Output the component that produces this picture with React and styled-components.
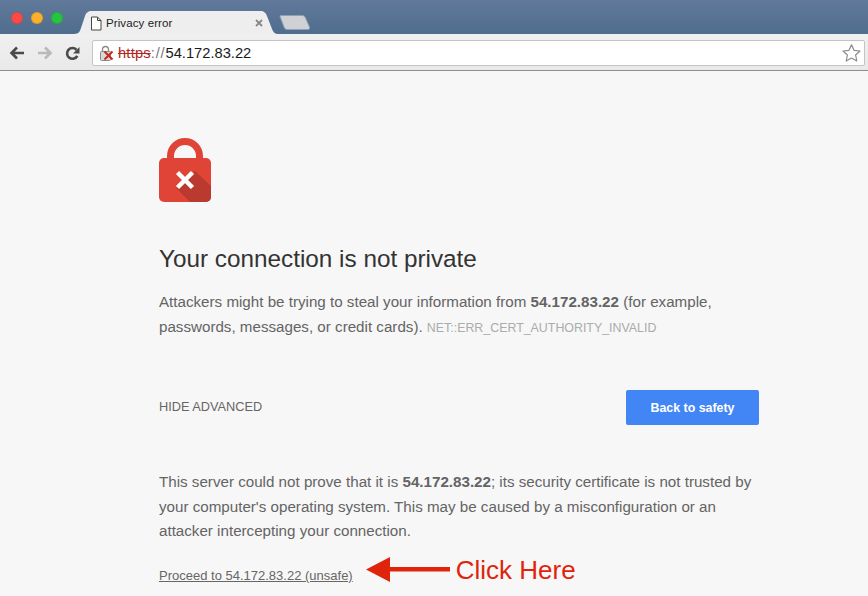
import styled, { createGlobalStyle } from 'styled-components';

const GlobalStyle = createGlobalStyle`
  html, body {
    margin: 0;
    padding: 0;
    height: 100%;
    overflow: hidden;
    background: #f7f7f7;
  }
  #root {
    height: 100%;
  }
`;

const Window = styled.div`
  display: flex;
  flex-direction: column;
  width: 868px;
  height: 596px;
  overflow: hidden;
  font-family: 'Liberation Sans', Arial, sans-serif;
`;

const TitleBar = styled.div`
  display: flex;
  align-items: flex-end;
  height: 34px;
  flex: none;
  background: linear-gradient(#61799a, #4f6d8e);
`;

const Lights = styled.div`
  display: flex;
  gap: 8px;
  align-self: flex-start;
  padding: 12px 0 0 11px;
  width: 74px;
  box-sizing: border-box;
  flex: none;
`;

const Light = styled.span`
  width: 12px;
  height: 12px;
  border-radius: 50%;
  background: ${(p) => p.$color};
  box-shadow: inset 0 0 0 1px rgba(0, 0, 0, 0.1);
`;

const Tab = styled.div`
  position: relative;
  display: flex;
  align-items: center;
  width: 204px;
  height: 23px;
  padding: 1px 0 0 16px;
  box-sizing: border-box;
  flex: none;
  font-size: 11.5px;
  letter-spacing: 0.1px;
  color: #222;
`;

const TabShape = styled.svg`
  position: absolute;
  left: 0;
  top: 0;
  z-index: 0;
`;

const TabIcon = styled.svg`
  position: relative;
  flex: none;
  margin: 0 4px 0 0;
`;

const TabTitle = styled.span`
  position: relative;
  flex: 1;
`;

const TabClose = styled.svg`
  position: relative;
  flex: none;
  margin-right: 15px;
`;

const NewTab = styled.svg`
  flex: none;
  align-self: flex-end;
  margin: 0 0 4px 1px;
`;

const Toolbar = styled.div`
  display: flex;
  align-items: center;
  height: 37px;
  flex: none;
  box-sizing: border-box;
  padding: 2px 3px 0 9px;
  background: linear-gradient(#f0f0f0, #e9e9e9);
  border-bottom: 1px solid #8e8e8e;
`;

const NavIcon = styled.svg`
  flex: none;
  margin-right: ${(p) => p.$gap}px;
`;

const Omnibox = styled.div`
  display: flex;
  align-items: center;
  flex: 1;
  height: 26px;
  box-sizing: border-box;
  padding: 0 2px 0 6px;
  background: #fff;
  border: 1px solid #c4c4c4;
  border-radius: 2px;
  font-size: 14.7px;
  color: #1a1a1a;
`;

const SecurityIcon = styled.svg`
  flex: none;
  margin-right: 4px;
`;

const Scheme = styled.span`
  color: #b3261e;
  text-decoration: line-through;
  letter-spacing: 0.2px;
`;

const Separator = styled.span`
  color: #777;
  letter-spacing: 0.8px;
`;

const Host = styled.span`
  flex: 1;
`;

const Page = styled.main`
  position: relative;
  flex: 1;
  box-sizing: border-box;
  padding: 67px 109px 0 159px;
  background: #f7f7f7;
  color: #646464;
  font-size: 15.16px;
  line-height: 24.5px;
`;

const LockIcon = styled.svg`
  display: block;
`;

const Heading = styled.h1`
  margin: 42px 0 16px;
  font-size: 24.3px;
  line-height: 30px;
  font-weight: 400;
  color: #333;
`;

const Paragraph = styled.p`
  margin: 0;
`;

const ErrorCode = styled.span`
  font-size: 12.4px;
  color: #ababab;
`;

const Actions = styled.div`
  display: flex;
  align-items: center;
  justify-content: space-between;
  margin: 50px 0 45px;
`;

const TextButton = styled.span`
  font-size: 12.75px;
  color: #666;
`;

const PrimaryButton = styled.button`
  width: 133px;
  height: 35px;
  padding: 0;
  border: 0;
  border-radius: 2px;
  background: #4285f4;
  color: #fff;
  font-family: inherit;
  font-size: 12.4px;
  font-weight: 700;
`;

const ProceedRow = styled.div`
  display: flex;
  align-items: center;
  margin-top: 10px;
  height: 32px;
`;

const ProceedLink = styled.a`
  font-size: 13px;
  color: #666;
  text-decoration: underline;
  margin-top: 13px;
`;

const Arrow = styled.svg`
  flex: none;
  margin: 0 6px 0 13px;
`;

const Annotation = styled.span`
  font-size: 26px;
  line-height: 32px;
  color: #e0240c;
`;

export default function App() {
  return (
    <Window>
      <GlobalStyle />
      <TitleBar>
        <Lights>
          <Light $color="#fc4a47" />
          <Light $color="#fcb02b" />
          <Light $color="#27c43f" />
        </Lights>
        <Tab>
          <TabShape width="204" height="23" viewBox="0 0 204 23">
            <path d="M0 23 C5 23 6 20 7 17 L11 5 C12 2 14 0 18 0 L186 0 C190 0 192 2 193 5 L198 18 C199 21 201 23 204 23 Z" fill="#eeeeee" />
          </TabShape>
          <TabIcon width="12" height="15" viewBox="0 0 12 15">
            <path d="M1.500 1H7.500L11 4.500V14H1.500Z M7.500 1V4.500H11" fill="#fff" stroke="#444" strokeWidth="1" />
          </TabIcon>
          <TabTitle>Privacy error</TabTitle>
          <TabClose width="8" height="8" viewBox="0 0 8 8">
            <path d="M1 1L7 7M7 1L1 7" stroke="#888" strokeWidth="1.800" />
          </TabClose>
        </Tab>
        <NewTab width="32" height="15" viewBox="0 0 32 15">
          <path d="M1 1.500 C1 1 1.500 .5 2 .5 L23 .5 C25 .5 26 1.500 26.500 3 L30.500 12 C31 13.500 30 14.500 29 14.500 L8 14.500 C6.500 14.500 5.500 13.500 5 12 Z" fill="#cfd1d4" stroke="#8fa0b4" strokeWidth="1" />
        </NewTab>
      </TitleBar>
      <Toolbar>
        <NavIcon $gap={12} width="16" height="14" viewBox="0 0 16 14">
          <path d="M15 7H3M8 1.500L2.500 7L8 12.500" fill="none" stroke="#4a4a4a" strokeWidth="2.600" />
        </NavIcon>
        <NavIcon $gap={12} width="16" height="14" viewBox="0 0 16 14">
          <path d="M1 7H13M8 1.500L13.500 7L8 12.500" fill="none" stroke="#b9b9b9" strokeWidth="2.600" />
        </NavIcon>
        <NavIcon $gap={12} width="15" height="15" viewBox="0 0 15 15">
          <path d="M12.300 9.800A5.400 5.400 0 1 1 11.500 3.800" fill="none" stroke="#4a4a4a" strokeWidth="2.600" />
          <path d="M14.500 1V7.500H8Z" fill="#4a4a4a" />
        </NavIcon>
        <Omnibox>
          <SecurityIcon width="15" height="17" viewBox="0 0 15 17">
            <path d="M3.500 7V4.500A3 3 0 0 1 9.500 4.500V7" fill="none" stroke="#8a8a8a" strokeWidth="1.300" />
            <rect x="1.500" y="6.500" width="10" height="9" rx="1" fill="#d8d8d8" stroke="#8a8a8a" />
            <path d="M5.500 6.500L13.500 14.500M13.500 6.500L5.500 14.500" stroke="#c8281e" strokeWidth="2" />
          </SecurityIcon>
          <Scheme>https</Scheme>
          <Host><Separator>://</Separator>54.172.83.22</Host>
          <svg width="21" height="20" viewBox="0 0 21 20">
            <path d="M10.500 1.800L13 7.300L19 8L14.600 12L15.800 18L10.500 15L5.200 18L6.400 12L2 8L8 7.300Z" fill="#fff" stroke="#8b8b8b" strokeWidth="1.200" strokeLinejoin="round" />
          </svg>
        </Omnibox>
      </Toolbar>
      <Page>
        <LockIcon width="52" height="64" viewBox="0 0 52 64">
          <path d="M11.500 24V18A14.500 14.500 0 0 1 40.500 18V24" fill="none" stroke="#e04436" strokeWidth="7" />
          <rect x="0" y="20" width="52" height="44" rx="5" fill="#e04436" />
          <path d="M36 33L52 48V59A5 5 0 0 1 47 64H31L17 50Z" fill="#bb3a2f" />
          <path d="M18.500 34.500L33.500 49.500M33.500 34.500L18.500 49.500" stroke="#fff" strokeWidth="4.500" />
        </LockIcon>
        <Heading>Your connection is not private</Heading>
        <Paragraph>
          Attackers might be trying to steal your information from <b>54.172.83.22</b> (for example,
          passwords, messages, or credit cards). <ErrorCode>NET::ERR_CERT_AUTHORITY_INVALID</ErrorCode>
        </Paragraph>
        <Actions>
          <TextButton>HIDE ADVANCED</TextButton>
          <PrimaryButton>Back to safety</PrimaryButton>
        </Actions>
        <Paragraph>
          This server could not prove that it is <b>54.172.83.22</b>; its security certificate is not trusted by
          your computer's operating system. This may be caused by a misconfiguration or an
          attacker intercepting your connection.
        </Paragraph>
        <ProceedRow>
          <ProceedLink href="#">Proceed to 54.172.83.22 (unsafe)</ProceedLink>
          <Arrow width="84" height="25" viewBox="0 0 84 25">
            <path d="M0 12.500L24 0V10H84V14.500H24V25Z" fill="#e0240c" />
          </Arrow>
          <Annotation>Click Here</Annotation>
        </ProceedRow>
      </Page>
    </Window>
  );
}
